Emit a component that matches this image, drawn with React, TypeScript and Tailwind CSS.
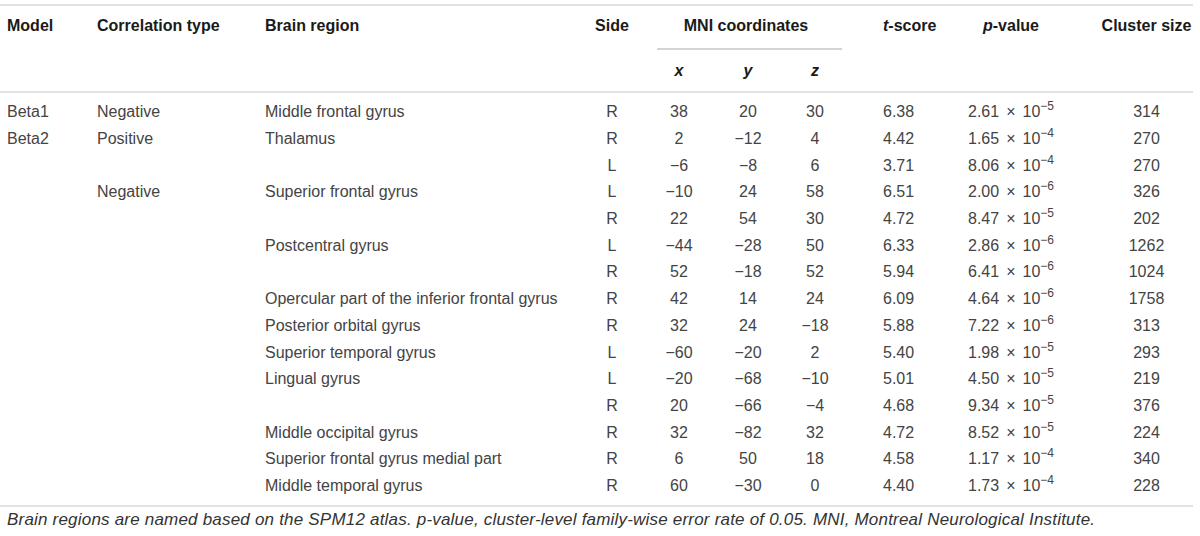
import React from "react";

const rows: string[][] = [
  ["Beta1", "Negative", "Middle frontal gyrus", "R", "38", "20", "30", "6.38", "2.61", "−5", "314"],
  ["Beta2", "Positive", "Thalamus", "R", "2", "−12", "4", "4.42", "1.65", "−4", "270"],
  ["", "", "", "L", "−6", "−8", "6", "3.71", "8.06", "−4", "270"],
  ["", "Negative", "Superior frontal gyrus", "L", "−10", "24", "58", "6.51", "2.00", "−6", "326"],
  ["", "", "", "R", "22", "54", "30", "4.72", "8.47", "−5", "202"],
  ["", "", "Postcentral gyrus", "L", "−44", "−28", "50", "6.33", "2.86", "−6", "1262"],
  ["", "", "", "R", "52", "−18", "52", "5.94", "6.41", "−6", "1024"],
  ["", "", "Opercular part of the inferior frontal gyrus", "R", "42", "14", "24", "6.09", "4.64", "−6", "1758"],
  ["", "", "Posterior orbital gyrus", "R", "32", "24", "−18", "5.88", "7.22", "−6", "313"],
  ["", "", "Superior temporal gyrus", "L", "−60", "−20", "2", "5.40", "1.98", "−5", "293"],
  ["", "", "Lingual gyrus", "L", "−20", "−68", "−10", "5.01", "4.50", "−5", "219"],
  ["", "", "", "R", "20", "−66", "−4", "4.68", "9.34", "−5", "376"],
  ["", "", "Middle occipital gyrus", "R", "32", "−82", "32", "4.72", "8.52", "−5", "224"],
  ["", "", "Superior frontal gyrus medial part", "R", "6", "50", "18", "4.58", "1.17", "−4", "340"],
  ["", "", "Middle temporal gyrus", "R", "60", "−30", "0", "4.40", "1.73", "−4", "228"],
];

const cols = "grid grid-cols-[97px_168px_315px_64px_70px_68px_66px_112px_102px_131px]";

export default function App() {
  return (
    <div
      className="w-[1200px] h-[536px] bg-white overflow-hidden"
      style={{ fontFamily: '"Liberation Sans", Arial, sans-serif' }}
    >
      <div className="w-[1193px]">
        <div className="mt-[4px] h-[2px] bg-[#e2e2e2]" />
        {/* Header */}
        <div className={`${cols} grid-rows-[44px_41px] text-[16px] leading-[20px] font-bold text-[#1a1a1a]`}>
          <div className="row-span-2 pl-[7px] pt-[10px]">Model</div>
          <div className="row-span-2 pt-[10px]">Correlation type</div>
          <div className="row-span-2 pt-[10px]">Brain region</div>
          <div className="row-span-2 pt-[10px] text-center">Side</div>
          <div className="col-span-3 flex flex-col">
            <div className="pt-[10px] text-center">MNI coordinates</div>
            <div className="mt-auto ml-[13px] mr-[6px] h-[2px] bg-[#d4d4d4]" />
          </div>
          <div className="row-span-2 pl-[35px] pt-[10px]">
            <i>t</i>-score
          </div>
          <div className="row-span-2 pt-[10px] text-center">
            <i>p</i>-value
          </div>
          <div className="row-span-2 pl-[38px] pt-[10px] text-center">Cluster size</div>
          <div className="col-start-5 pt-[11px] text-center italic">x</div>
          <div className="pt-[11px] text-center italic">y</div>
          <div className="pt-[11px] text-center italic">z</div>
        </div>
        <div className="h-[2px] bg-[#e2e2e2]" />
        {/* Body */}
        <div className="py-[6px] text-[16px] leading-[20px] text-[#444]">
          {rows.map((r, i) => (
            <div key={i} className={`${cols} h-[26.7px] items-center`}>
              <div className="pl-[7px]">{r[0]}</div>
              <div>{r[1]}</div>
              <div className="whitespace-nowrap">{r[2]}</div>
              <div className="text-center">{r[3]}</div>
              <div className="text-center">{r[4]}</div>
              <div className="text-center">{r[5]}</div>
              <div className="text-center">{r[6]}</div>
              <div className="pl-[35px]">{r[7]}</div>
              <div className="text-center whitespace-nowrap">
                {r[8]}
                <span className="mx-[7px]">×</span>10
                <sup className="text-[12px] top-[-7px]">{r[9]}</sup>
              </div>
              <div className="pl-[38px] text-center">{r[10]}</div>
            </div>
          ))}
        </div>
        <div className="h-[2px] bg-[#e2e2e2]" />
        <div className="mt-[3px] pl-[7px] text-[17px] leading-[20px] tracking-[0.2px] italic text-[#333] whitespace-nowrap">
          Brain regions are named based on the SPM12 atlas. p-value, cluster-level family-wise error rate of 0.05. MNI, Montreal Neurological Institute.
        </div>
      </div>
    </div>
  );
}
